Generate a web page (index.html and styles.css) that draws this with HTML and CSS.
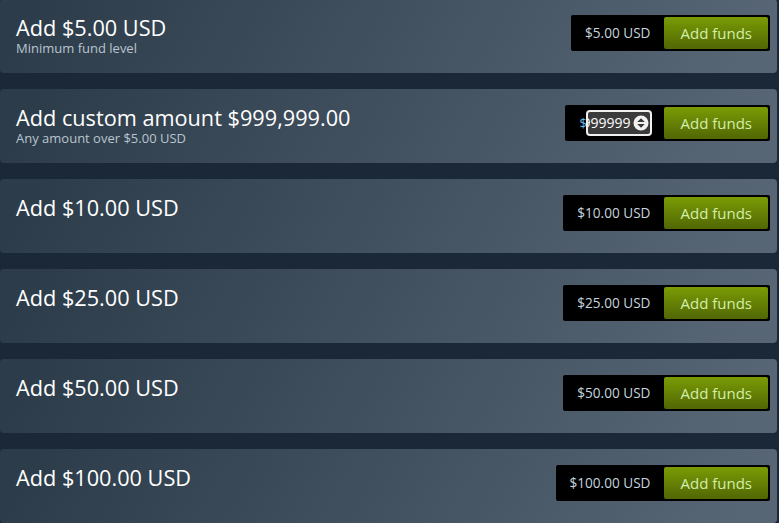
FILE: index.html
```html
<!DOCTYPE html>
<html>
<head>
<meta charset="utf-8">
<link rel="stylesheet" href="styles.css">
</head>
<body>
<div class="list">
  <div class="card">
    <div class="info">
      <h1 class="title">Add $5.00 USD</h1>
      <p class="sub">Minimum fund level</p>
    </div>
    <div class="action">
      <div class="price">$5.00 USD</div>
      <a class="btn">Add funds</a>
    </div>
  </div>
  <div class="card">
    <div class="info">
      <h1 class="title">Add custom amount $999,999.00</h1>
      <p class="sub">Any amount over $5.00 USD</p>
    </div>
    <div class="action">
      <div class="price custom">
        <span class="cur">$</span>
        <span class="input">
          <span class="val">999999</span><span class="caret"></span>
          <svg class="spin" width="16" height="16" viewBox="0 0 16 16"><circle cx="8" cy="8" r="7.5" fill="#f2f2f2"/><path d="M4.2 7 L8 3.2 L11.8 7 Z M4.2 9 L8 12.8 L11.8 9 Z" fill="#3a3a3a"/></svg>
        </span>
      </div>
      <a class="btn">Add funds</a>
    </div>
  </div>
  <div class="card">
    <div class="info"><h1 class="title">Add $10.00 USD</h1></div>
    <div class="action"><div class="price">$10.00 USD</div><a class="btn">Add funds</a></div>
  </div>
  <div class="card">
    <div class="info"><h1 class="title">Add $25.00 USD</h1></div>
    <div class="action"><div class="price">$25.00 USD</div><a class="btn">Add funds</a></div>
  </div>
  <div class="card">
    <div class="info"><h1 class="title">Add $50.00 USD</h1></div>
    <div class="action"><div class="price">$50.00 USD</div><a class="btn">Add funds</a></div>
  </div>
  <div class="card">
    <div class="info"><h1 class="title">Add $100.00 USD</h1></div>
    <div class="action"><div class="price">$100.00 USD</div><a class="btn">Add funds</a></div>
  </div>
</div>
</body>
</html>
```
FILE: styles.css
```css
html, body {
  margin: 0;
  padding: 0;
  background: #1b2838;
  overflow: hidden;
}
body {
  font-family: "Open Sans", "Noto Sans", Arial, sans-serif;
  width: 779px;
  height: 523px;
}
.list {
  display: flex;
  flex-direction: column;
  gap: 16px;
  margin-top: -1px;
}
.card {
  height: 74px;
  box-sizing: border-box;
  margin-right: 2px;
  padding: 16px 7px 0 16px;
  border-radius: 4px;
  background: linear-gradient(-60deg, rgba(226,244,255,0.3) 5%, rgba(84,107,115,0.3) 95%);
  display: flex;
  justify-content: space-between;
  align-items: flex-start;
}
.info {
  display: flex;
  flex-direction: column;
}
.title {
  margin: 0;
  font-size: 21.7px;
  font-weight: 400;
  line-height: 24px;
  color: #ffffff;
  padding-top: 1px;
}
.sub {
  margin: 0;
  font-size: 13px;
  line-height: 16px;
  color: #b9c5d0;
}
.action {
  display: flex;
  align-items: center;
  background: #000;
  border-radius: 2px;
  padding: 2px;
  height: 36px;
  box-sizing: border-box;
}
.price {
  font-size: 13.6px;
  color: #c6d4df;
  padding: 0 14px 0 12px;
  line-height: 32px;
}
.price.custom {
  display: flex;
  align-items: center;
  padding: 0 12px 0 12px;
  height: 32px;
  font-size: 13px;
}
.cur {
  color: #67c1f5;
  width: 7px;
  overflow: hidden;
}
.input {
  display: flex;
  align-items: center;
  height: 26px;
  width: 66px;
  box-sizing: border-box;
  border: 2px solid #f0f0f0;
  border-radius: 4px;
  background: #3b3b3b;
  color: #ffffff;
  font-size: 14px;
  overflow: hidden;
  padding-right: 2px;
}
.val {
  margin-left: -6px;
  letter-spacing: 0;
}
.caret {
  width: 1px;
  height: 15px;
  background: #fff;
  margin-left: 1px;
}
.spin {
  flex: none;
  margin-left: 1px;
}
.btn {
  display: block;
  background: linear-gradient(to bottom, #799905 5%, #536904 95%);
  color: #d2efa9;
  font-size: 15px;
  line-height: 32px;
  padding: 0 16px;
  border-radius: 2px;
  cursor: pointer;
}
```
